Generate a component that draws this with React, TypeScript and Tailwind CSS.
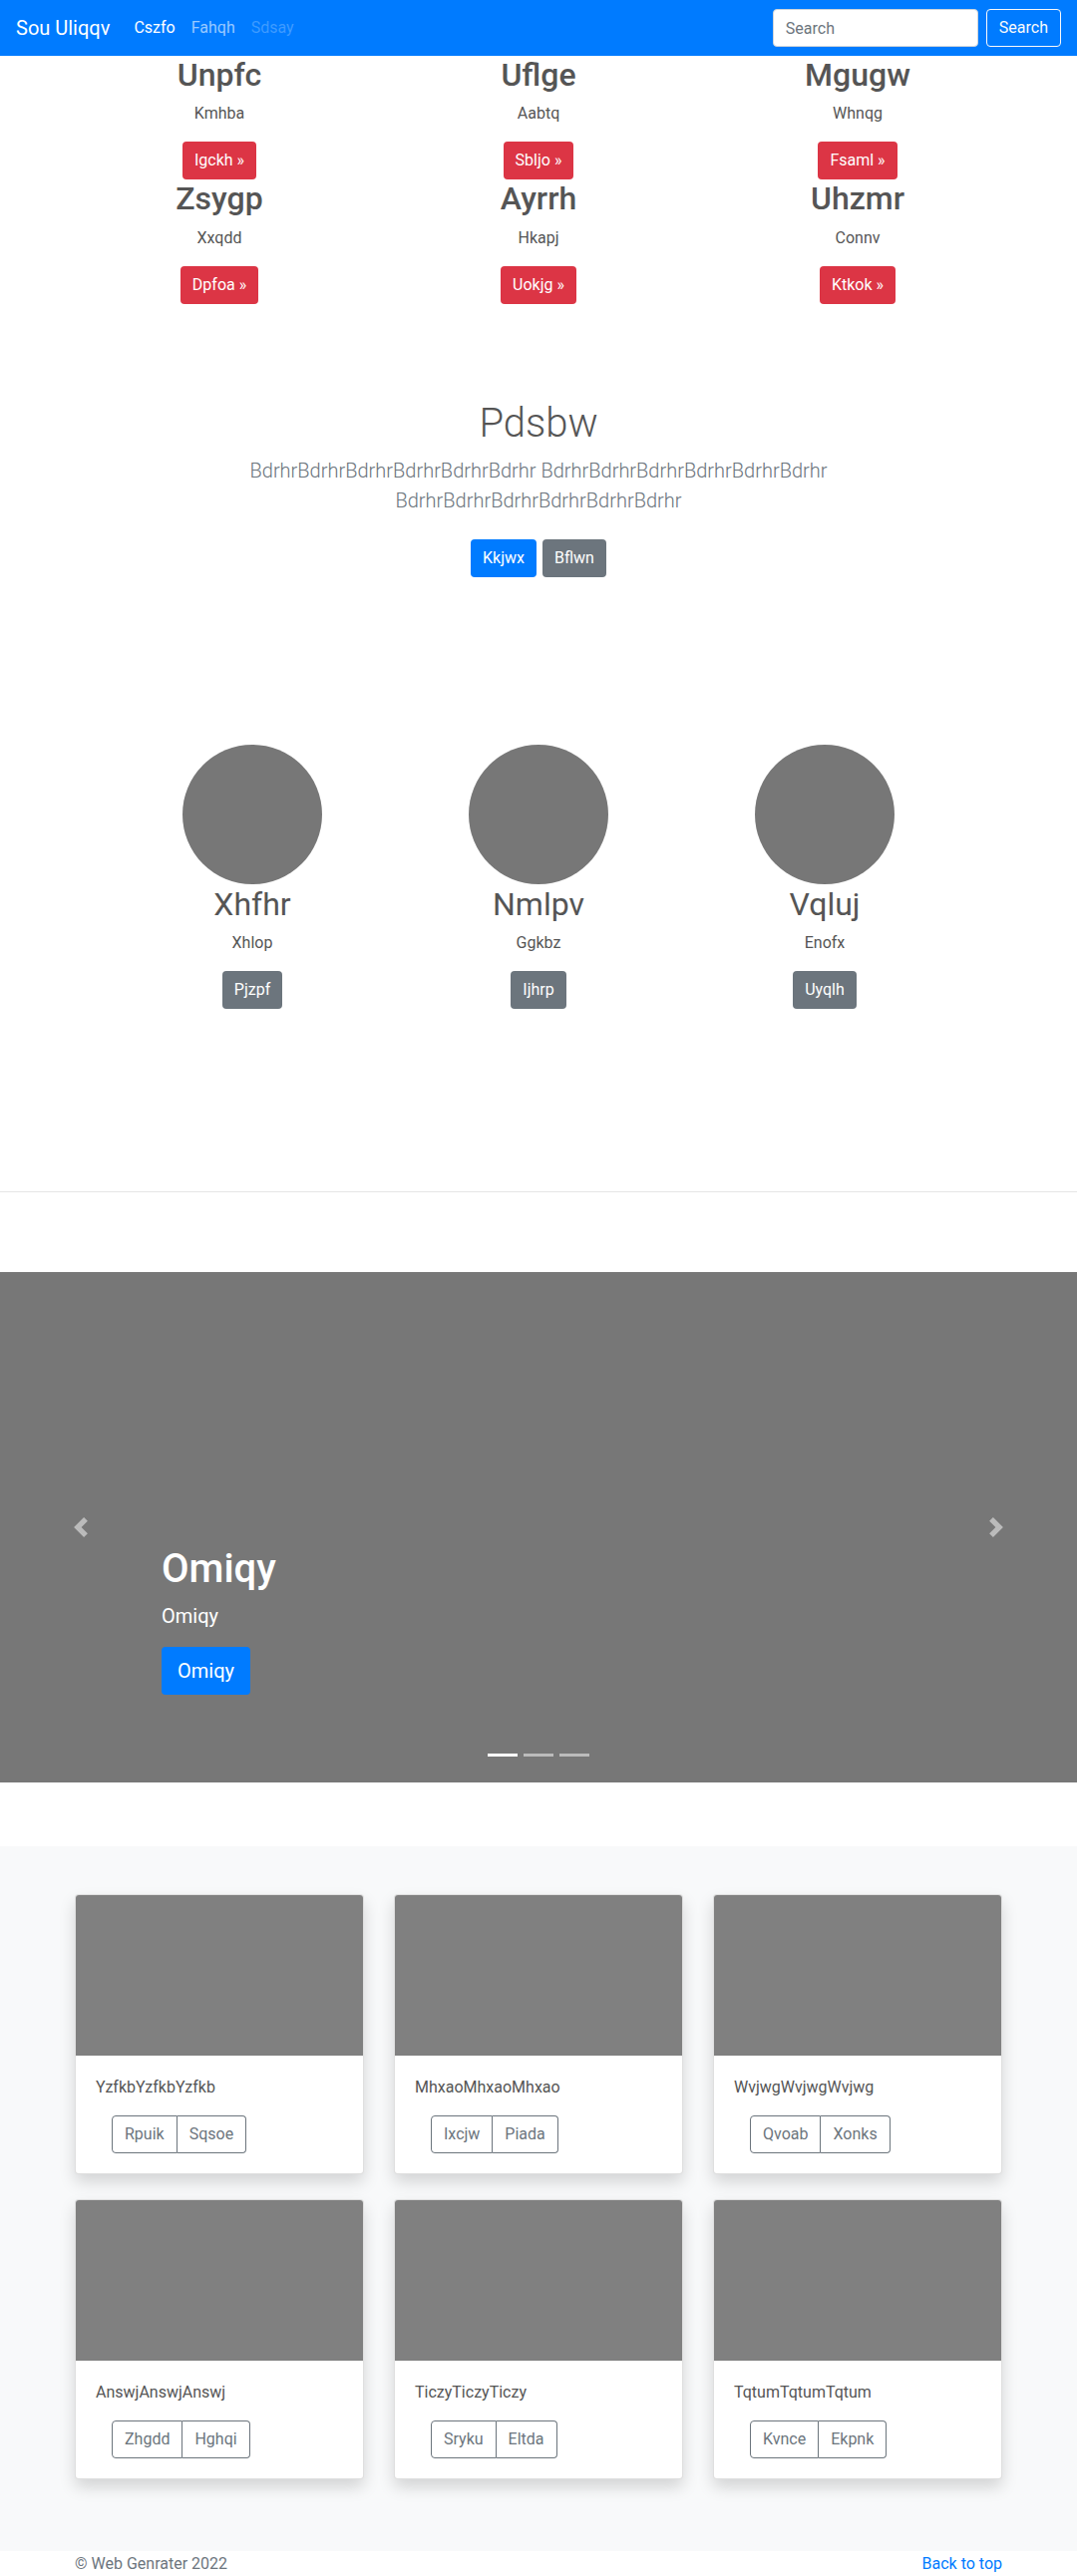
const features = [
  { title: 'Unpfc', text: 'Kmhba', cta: 'Igckh' },
  { title: 'Uflge', text: 'Aabtq', cta: 'Sbljo' },
  { title: 'Mgugw', text: 'Whnqg', cta: 'Fsaml' },
  { title: 'Zsygp', text: 'Xxqdd', cta: 'Dpfoa' },
  { title: 'Ayrrh', text: 'Hkapj', cta: 'Uokjg' },
  { title: 'Uhzmr', text: 'Connv', cta: 'Ktkok' },
];

const people = [
  { name: 'Xhfhr', text: 'Xhlop', cta: 'Pjzpf' },
  { name: 'Nmlpv', text: 'Ggkbz', cta: 'Ijhrp' },
  { name: 'Vqluj', text: 'Enofx', cta: 'Uyqlh' },
];

const cards = [
  { text: 'YzfkbYzfkbYzfkb', a: 'Rpuik', b: 'Sqsoe' },
  { text: 'MhxaoMhxaoMhxao', a: 'Ixcjw', b: 'Piada' },
  { text: 'WvjwgWvjwgWvjwg', a: 'Qvoab', b: 'Xonks' },
  { text: 'AnswjAnswjAnswj', a: 'Zhgdd', b: 'Hghqi' },
  { text: 'TiczyTiczyTiczy', a: 'Sryku', b: 'Eltda' },
  { text: 'TqtumTqtumTqtum', a: 'Kvnce', b: 'Ekpnk' },
];

function Navbar() {
  return (
    <nav className="h-14 bg-[#007bff] flex items-center px-4">
      <a href="#" className="text-xl leading-[30px] text-white mr-4">Sou Uliqqv</a>
      <ul className="flex items-center">
        <li><a href="#" className="block px-2 leading-6 text-white">Cszfo</a></li>
        <li><a href="#" className="block px-2 leading-6 text-white/60">Fahqh</a></li>
        <li><span className="block px-2 leading-6 text-white/25">Sdsay</span></li>
      </ul>
      <form className="ml-auto flex items-center gap-2" onSubmit={(e) => e.preventDefault()}>
        <input
          type="text"
          placeholder="Search"
          className="w-[206px] h-[38px] rounded border border-[#ced4da] bg-white px-3 text-base text-[#495057] placeholder:text-[#6c757d] outline-none"
        />
        <button className="h-[38px] px-3 rounded border border-[#f8f9fa] text-[#f8f9fa] text-base">Search</button>
      </form>
    </nav>
  );
}

function Features() {
  return (
    <section className="w-[960px] mx-auto grid grid-cols-3">
      {features.map((f) => (
        <div key={f.title} className="text-center">
          <h2 className="text-[32px] leading-[1.2] font-medium text-[#555] mb-2">{f.title}</h2>
          <p className="leading-6 text-[#555] mb-4">{f.text}</p>
          <a href="#" className="inline-flex items-center h-[38px] px-3 rounded bg-[#dc3545] text-white">
            {f.cta} &raquo;
          </a>
        </div>
      ))}
    </section>
  );
}

function Intro() {
  return (
    <section className="pt-[96px] text-center">
      <h1 className="text-[40px] leading-[1.2] font-light text-[#555] mb-2">Pdsbw</h1>
      <p className="max-w-[610px] mx-auto text-xl leading-[30px] font-light text-[#6c757d] mb-4">
        BdrhrBdrhrBdrhrBdrhrBdrhrBdrhr BdrhrBdrhrBdrhrBdrhrBdrhrBdrhr BdrhrBdrhrBdrhrBdrhrBdrhrBdrhr
      </p>
      <div className="flex justify-center gap-[6px] py-2">
        <a href="#" className="inline-flex items-center h-[38px] px-3 rounded bg-[#007bff] text-white">Kkjwx</a>
        <a href="#" className="inline-flex items-center h-[38px] px-3 rounded bg-[#6c757d] text-white">Bflwn</a>
      </div>
    </section>
  );
}

function People() {
  return (
    <section className="w-[861px] mx-auto mt-[160px] grid grid-cols-3">
      {people.map((p) => (
        <div key={p.name} className="text-center">
          <div className="w-[140px] h-[140px] rounded-full bg-[#777] mx-auto" />
          <h2 className="text-[32px] leading-[1.2] font-normal text-[#555] mt-[1px] mb-2">{p.name}</h2>
          <p className="leading-6 text-[#555] mb-4">{p.text}</p>
          <a href="#" className="inline-flex items-center h-[38px] px-3 rounded bg-[#6c757d] text-white">{p.cta}</a>
        </div>
      ))}
    </section>
  );
}

function Carousel() {
  return (
    <div className="relative h-[512px] bg-[#777] mb-16">
      <a href="#" className="absolute left-0 top-0 bottom-0 w-[15%] flex items-center justify-center opacity-50">
        <svg width="20" height="20" viewBox="0 0 8 8" fill="#fff">
          <path d="M5.25 0l-4 4 4 4 1.5-1.5L4.25 4l2.5-2.5L5.25 0z" />
        </svg>
      </a>
      <a href="#" className="absolute right-0 top-0 bottom-0 w-[15%] flex items-center justify-center opacity-50">
        <svg width="20" height="20" viewBox="0 0 8 8" fill="#fff">
          <path d="M2.75 0l-1.5 1.5L3.75 4l-2.5 2.5L2.75 8l4-4-4-4z" />
        </svg>
      </a>
      <div className="absolute left-[15%] right-[15%] bottom-12 py-5 text-white">
        <h1 className="text-[40px] leading-[1.2] font-medium mb-2">Omiqy</h1>
        <p className="text-xl leading-[30px] mb-4">Omiqy</p>
        <p className="mb-4 pb-1">
          <a href="#" className="inline-flex items-center h-12 px-4 rounded bg-[#007bff] text-xl text-white">Omiqy</a>
        </p>
      </div>
      <ol className="absolute left-0 right-0 bottom-[26px] flex justify-center gap-[6px]">
        <li className="w-[30px] h-[3px] bg-white" />
        <li className="w-[30px] h-[3px] bg-white/50" />
        <li className="w-[30px] h-[3px] bg-white/50" />
      </ol>
    </div>
  );
}

function Album() {
  return (
    <section className="bg-[#f8f9fa] pt-12 pb-[72px]">
      <div className="w-[930px] mx-auto grid grid-cols-3 gap-x-[30px] gap-y-[25px]">
        {cards.map((c) => (
          <div key={c.text} className="bg-white rounded border border-black/[0.125] shadow-[0_0.5rem_1rem_rgba(0,0,0,0.15)] overflow-hidden">
            <div className="h-[161px] bg-[#808080]" />
            <div className="p-5">
              <p className="leading-6 text-[#555] mb-4">{c.text}</p>
              <div className="ml-4 inline-flex">
                <button className="h-[38px] px-3 border border-[#6c757d] rounded-l text-[#6c757d]">{c.a}</button>
                <button className="h-[38px] px-3 border border-l-0 border-[#6c757d] rounded-r text-[#6c757d]">{c.b}</button>
              </div>
            </div>
          </div>
        ))}
      </div>
    </section>
  );
}

export default function App() {
  return (
    <div className="min-h-screen bg-white text-base text-[#212529] [font-family:'Segoe_UI',Roboto,'Helvetica_Neue',Arial,sans-serif]">
      <Navbar />
      <Features />
      <Intro />
      <People />
      <hr className="mt-[183px] mb-20 border-0 border-t border-black/10" />
      <Carousel />
      <Album />
      <footer className="w-[930px] mx-auto flex justify-between pt-[1px] pb-12 leading-6 text-[#6c757d]">
        <p>&copy; Web Genrater 2022</p>
        <a href="#" className="text-[#007bff]">Back to top</a>
      </footer>
    </div>
  );
}
